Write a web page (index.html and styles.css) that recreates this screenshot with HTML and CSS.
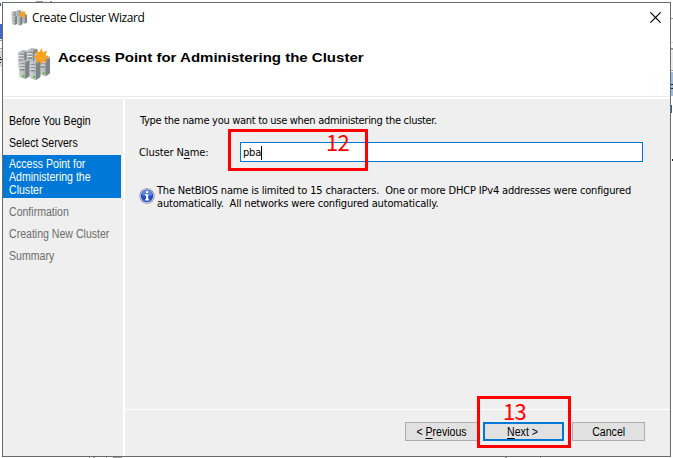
FILE: index.html
```html
<!DOCTYPE html>
<html lang="en">
<head>
<meta charset="utf-8">
<title>Create Cluster Wizard</title>
<link rel="stylesheet" href="styles.css">
</head>
<body>
<svg class="backdrop" width="673" height="458" aria-hidden="true">
  <path fill="#4167c6" d="M0 24h2v15H0z"/>
  <path fill="#d8d8d8" d="M0 50h2v17H0zM671 42h2v1h-2z"/>
  <path fill="#eee" d="M671 51h2v19h-2z"/>
  <path fill="#999" d="M0 40h2v1H0zM0 48h2v1H0zM671 18h2v1h-2zM671 48h2v2h-2zM671 70h2v1h-2z"/>
  <path fill="#9fbbe0" d="M671 72h2v24h-2z"/>
  <path fill="#222" d="M0 57h1v1H0zM0 59h2v1H0zM0 62h1v1H0zM671 84h2v1h-2zM671 88h2v1h-2zM672 159h1v2h-1z"/>
  <path fill="#28629c" d="M671 105h1v8h-1zM0 3h1v3h-1z"/>
  <path fill="#999" d="M89 457h1v1h-1zM93 457h2v1h-2zM106 457h1v1h-1zM113 457h9v1h-9zM505 457h2v1h-2zM540 457h1v1h-1z"/>
  <path fill="#999" d="M36 1h7v1h-7zM50 1h2v1h-2z"/>
</svg>
<main class="dialog">
  <header class="titlebar">
    <svg class="app-icon" viewBox="0 0 34 34"><use href="#cluster"/></svg>
    <span class="title">Create Cluster Wizard</span>
    <svg class="close" viewBox="0 0 10 10"><path d="M.3.3l9.4 9.4M9.7.3L.3 9.7" stroke="#000" stroke-width="1.1"/></svg>
  </header>
  <section class="banner">
    <svg class="banner-icon" viewBox="0 0 34 34">
      <defs>
        <linearGradient id="metal" x1="0" x2="1"><stop offset="0" stop-color="#d3d6d8"/><stop offset="1" stop-color="#989da1"/></linearGradient>
        <g id="tower">
          <path d="M0 2L5 0 11 1V17L6 20 0 18z" fill="url(#metal)"/>
          <path d="M6.500 3L11 1V17L6.500 20z" fill="#7d8387"/>
          <path d="M1 4.500h4.500M1 7.500h4.500M1 10.500h4.500" stroke="#62696e"/>
          <path d="M1 5.500h4.500M1 8.500h4.500" stroke="#fff" stroke-width=".8"/>
          <path d="M3.500 16h2v2h-2z" fill="#4bc526"/>
        </g>
        <g id="cluster">
          <use href="#tower" x="1" y="2"/><use href="#tower" x="10" y="0"/>
          <use href="#tower" x="18" y="4"/><use href="#tower" x="23" y="9"/>
          <use href="#tower" x="2" y="12"/><use href="#tower" x="13" y="13"/>
          <path d="M25 0l1.700 4.700 4.500-2.100-2 4.600 4.800 1.700-4.800 1.700 2 4.600-4.500-2-1.700 4.700-1.700-4.700-4.500 2 2-4.600L16 8.900l4.800-1.700-2-4.600 4.500 2.100z" fill="#f79b16"/>
          <circle cx="25" cy="8.500" r="4.500" fill="#faa41e"/>
        </g>
      </defs>
      <use href="#cluster"/>
    </svg>
    <h1>Access Point for Administering the Cluster</h1>
  </section>
  <div class="body">
    <nav class="steps">
      <div class="step"><span>Before You Begin</span></div>
      <div class="step"><span>Select Servers</span></div>
      <div class="step current"><span>Access Point for<br>Administering the<br>Cluster</span></div>
      <div class="step later"><span>Confirmation</span></div>
      <div class="step later"><span>Creating New Cluster</span></div>
      <div class="step later"><span>Summary</span></div>
    </nav>
    <div class="page">
      <section class="content">
        <p class="intro">Type the name you want to use when administering the cluster.</p>
        <div class="field">
          <label>Cluster N<u>a</u>me:</label>
          <div class="input"><span>pba</span><i class="caret"></i></div>
          <div class="mark mark-name"><b>12</b></div>
        </div>
        <div class="info">
          <svg class="info-icon" viewBox="0 0 16 16">
            <circle cx="8" cy="8" r="7.700" fill="#8c9099"/><circle cx="8" cy="8" r="6.900" fill="#d4daea"/>
            <circle cx="8" cy="8" r="6.200" fill="#2450c4"/><path d="M2.500 7a5.500 5.500 0 0 1 11 0q-5 2-11 0z" fill="#5c82dc"/>
            <path d="M7 3h2.200v2H7zM6 6.300h3.200v5h1V12.500H6v-1.200h1V7.500H6z" fill="#fff"/>
          </svg>
          <p>The NetBIOS name is limited to 15 characters.&nbsp; One or more DHCP IPv4 addresses were configured<br>automatically.&nbsp; All networks were configured automatically.</p>
        </div>
      </section>
      <footer class="actions">
        <div class="button prev"><span>&lt; <u>P</u>revious</span></div>
        <div class="button next"><span><u>N</u>ext &gt;</span></div>
        <div class="button cancel"><span>Cancel</span></div>
        <div class="mark mark-next"><b>13</b></div>
      </footer>
    </div>
  </div>
</main>
</body>
</html>
```
FILE: styles.css
```css
* { box-sizing: border-box; }
body { margin: 0; padding: 2px; width: 673px; height: 458px; overflow: hidden; background: #fff; color: #000; font: 12px/13px "Liberation Sans", Arial, sans-serif; }
p, h1 { margin: 0; }
u { text-underline-offset: 2px; text-decoration-thickness: 1px; }
.backdrop { position: absolute; left: 0; top: 0; }
.dialog { position: relative; width: 669px; height: 455px; border: 1px solid #6b6b6b; background: #fff; display: flex; flex-direction: column; }
.titlebar { height: 31px; display: flex; align-items: center; padding: 0 9px 0 8px; flex: none; }
.app-icon { width: 16px; height: 16px; margin-top: -2px; }
.title { margin: -1px 0 0 5px; font: 12px/16px "Open Sans", sans-serif; letter-spacing: -.43px; flex: 1; }
.close { width: 11px; height: 11px; margin-top: -2px; }
.banner { height: 63px; flex: none; display: flex; border-bottom: 1px solid #ececec; padding: 14px 0 0 14px; }
.banner-icon { width: 33px; height: 33px; }
h1 { margin: 2px 0 0 8px; font: bold 13.5px/16px "Liberation Sans", Arial, sans-serif; white-space: nowrap; transform: scaleX(1.112); transform-origin: left; }
.body { flex: 1; margin-top: 2px; display: flex; gap: 2px; min-height: 0; }
.steps { width: 120px; background: #efefef; padding-top: 12px; }
.step { height: 22px; padding: 4px 0 0 6px; white-space: nowrap; }
.step span { display: inline-block; transform: scaleX(.88); transform-origin: left; }
.current { width: 118px; height: 43px; padding-top: 3px; background: #0078d7; color: #fff; margin-bottom: 4px; }
.later { color: #6d6d6d; }
.page { flex: 1; display: flex; flex-direction: column; gap: 1px; }
.content { flex: 1; background: #efefef; padding: 15px 0 0 14px; font: 11px/13px "DejaVu Sans Condensed", "DejaVu Sans", sans-serif; white-space: nowrap; }
.intro { padding-left: 1px; letter-spacing: -.3px; }
.field { position: relative; margin-top: 15px; display: flex; align-items: center; height: 20px; }
.field label { width: 101px; padding-top: 1px; letter-spacing: -.1px; }
.input { width: 403px; height: 20px; border: 1px solid #0078d7; background: #fff; padding: 3px 2px; display: flex; letter-spacing: -.2px; }
.caret { width: 1px; height: 14px; background: #000; }
.info { margin-top: 22px; display: flex; gap: 2px; letter-spacing: -.17px; }
.info-icon { width: 16px; height: 16px; margin-top: 4px; }
.actions { position: relative; height: 46px; flex: none; background: #efefef; display: flex; padding: 12px 0 0 280px; }
.button { height: 19px; border: 1px solid #adadad; background: #e1e1e1; text-align: center; line-height: 18px; }
.button span { display: inline-block; transform: scaleX(.88); }
.prev { width: 73px; }
.next { width: 81px; margin-left: 5px; border: 2px solid #0078d7; line-height: 16px; padding-right: 2px; }
.cancel { width: 73px; margin-left: 8px; }
.mark { position: absolute; border: 3px solid #f00; color: #f00; }
.mark b { position: absolute; font: 22px/22px "Noto Sans CJK SC", "Noto Sans", sans-serif; letter-spacing: -.8px; }
.mark-name { left: 89px; top: -13px; width: 140px; height: 42px; }
.mark-name b { left: 95px; top: -2px; }
.mark-next { left: 352px; top: -14px; width: 94px; height: 52px; }
.mark-next b { left: 23px; top: 0; }
```
